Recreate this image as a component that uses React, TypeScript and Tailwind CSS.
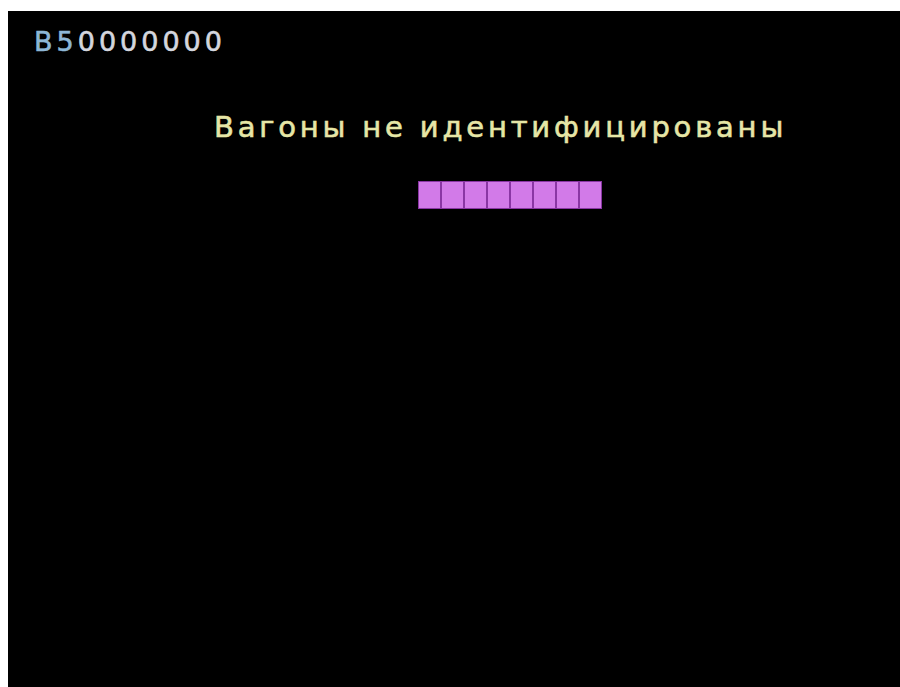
const cells = Array.from({ length: 8 })

export default function App() {
    return (
        <div className="h-[687px] w-full bg-white pl-[8px] pt-[11px] overflow-hidden">
            <div className="flex h-full flex-col bg-black font-['DejaVu_Sans',sans-serif] [-webkit-text-stroke:0.6px]">
                {/* номер состава */}
                <div className="pl-[26px] pt-[16px] text-[27px] leading-[30px] tracking-[4px] text-[#d4d6de]">
                    <span className="text-[#8db6d6]">B5</span>0000000
                </div>

                {/* сообщение */}
                <div className="pl-[206px] pt-[53px] text-[29px] leading-[34px] tracking-[3.8px] text-[#e6e6a6]">
                    Вагоны не идентифицированы
                </div>

                {/* индикатор */}
                <div className="ml-[410px] mt-[37px] flex h-[28px] w-[184px] gap-[2px] bg-[#8a36a4] px-[1px] py-[1px]">
                    {cells.map((_, i) => (
                        <div key={i} className="flex-1 bg-[#d27ae8]" />
                    ))}
                </div>
            </div>
        </div>
    )
}
